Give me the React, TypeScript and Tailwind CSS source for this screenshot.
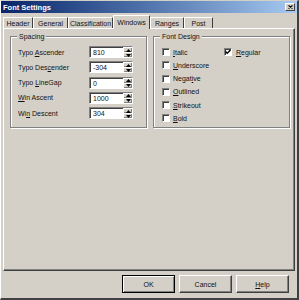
import React from 'react'

const tabs = [
  { label: 'Header', cls: 'w-[30px]' },
  { label: 'General', cls: 'w-[35px]' },
  { label: 'Classification', cls: 'w-[45px]' },
  { label: 'Windows', cls: 'w-[37px]', active: true },
  { label: 'Ranges', cls: 'w-[34px]' },
  { label: 'Post', cls: 'w-[29px]' },
]

const spacing = [
  { pre: 'Typo ', key: 'A', post: 'scender', value: '810' },
  { pre: 'Typo Des', key: 'c', post: 'ender', value: '-304' },
  { pre: 'Typo ', key: 'L', post: 'ineGap', value: '0' },
  { pre: '', key: 'W', post: 'in Ascent', value: '1000' },
  { pre: 'Wi', key: 'n', post: ' Descent', value: '304' },
]

const designLeft = [
  { pre: '', key: 'I', post: 'talic' },
  { pre: '', key: 'U', post: 'nderscore' },
  { pre: 'Negat', key: 'i', post: 've' },
  { pre: '', key: 'O', post: 'utlined' },
  { pre: '', key: 'S', post: 'trikeout' },
  { pre: '', key: 'B', post: 'old' },
]

function Label({ pre, k, post }: { pre: string; k: string; post: string }) {
  return (
    <span className="whitespace-pre">
      {pre}
      <span className="underline underline-offset-[1px]">{k}</span>
      {post}
    </span>
  )
}

function Spin({ value }: { value: string }) {
  return (
    <div className="flex h-[12px] w-[44px] bg-white border border-t-[#808080] border-l-[#808080] border-b-white border-r-white shadow-[inset_1px_1px_0_#404040]">
      <span className="flex-1 pl-[3px] pt-[1px] leading-[9px]">{value}</span>
      <div className="flex flex-col w-[9px] h-[10px]">
        <div className="flex-1 flex items-center justify-center bg-[#d4d0c8] border-t border-l border-t-white border-l-white shadow-[inset_-1px_-1px_0_#808080]">
          <svg width="5" height="3" viewBox="0 0 5 3"><path d="M2.5 0L5 3H0z" fill="#000" /></svg>
        </div>
        <div className="flex-1 flex items-center justify-center bg-[#d4d0c8] border-t border-l border-t-white border-l-white shadow-[inset_-1px_-1px_0_#808080]">
          <svg width="5" height="3" viewBox="0 0 5 3"><path d="M0 0H5L2.5 3z" fill="#000" /></svg>
        </div>
      </div>
    </div>
  )
}

function Check({ checked }: { checked?: boolean }) {
  return (
    <span className="w-[8px] h-[8px] bg-white border border-t-[#808080] border-l-[#808080] border-b-white border-r-white shadow-[inset_1px_1px_0_#404040] flex items-center justify-center">
      {checked && (
        <svg width="6" height="6" viewBox="0 0 6 6">
          <path d="M0.5 2.5L2.2 4.3L5.5 1" stroke="#000" strokeWidth="1.4" fill="none" />
        </svg>
      )}
    </span>
  )
}

function Group({ title, children, cls }: { title: string; children: React.ReactNode; cls: string }) {
  return (
    <div className={`relative h-[92px] border border-[#808080] shadow-[inset_1px_1px_0_#fff,1px_1px_0_#fff] ${cls}`}>
      <span className="absolute left-[6px] -top-[5px] px-[2px] bg-[#d4d0c8] leading-[9px]">{title}</span>
      {children}
    </div>
  )
}

function Button({ children, def }: { children: React.ReactNode; def?: boolean }) {
  return (
    <div
      className={`w-[53px] h-[18px] flex items-center justify-center bg-[#d4d0c8] ${
        def
          ? 'border border-black shadow-[inset_1px_1px_0_#fff,inset_-1px_-1px_0_#808080]'
          : 'border border-t-white border-l-white border-r-[#404040] border-b-[#404040] shadow-[inset_-1px_-1px_0_#808080]'
      }`}
    >
      {children}
    </div>
  )
}

export default function App() {
  return (
    <div className="w-[299px] h-[300px] bg-[#d4d0c8] font-['Liberation_Sans',Arial,sans-serif] text-[7px] leading-[9px] text-[#111] flex flex-col border-r-2 border-b-2 border-r-[#404040] border-b-[#404040] border-l border-t border-l-[#ffffff] border-t-[#d4d0c8]">
      {/* title bar */}
      <div className="h-[12px] flex items-center justify-between bg-gradient-to-r from-[#0a246a] to-[#a6caf0] pl-[2px] pr-[2px]">
        <span className="text-white font-bold text-[7.5px]">Font Settings</span>
        <div className="w-[10px] h-[8px] bg-[#d4d0c8] border border-t-white border-l-white border-r-[#404040] border-b-[#404040] flex items-center justify-center">
          <svg width="5" height="4" viewBox="0 0 5 4">
            <path d="M0.5 0.5L4.5 3.5M4.5 0.5L0.5 3.5" stroke="#000" strokeWidth="1.2" />
          </svg>
        </div>
      </div>

      {/* tabs */}
      <div className="h-[15px] flex items-end pl-[2px]">
        {tabs.map(t =>
          t.active ? (
            <div
              key={t.label}
              className={`${t.cls} h-[14px] -mb-px relative z-10 bg-[#d4d0c8] border-l border-t border-r border-l-white border-t-white border-r-[#404040] rounded-t-[1px] flex items-start justify-center pt-[2px]`}
            >
              {t.label}
            </div>
          ) : (
            <div
              key={t.label}
              className={`${t.cls} h-[11px] border-l border-t border-r border-l-white border-t-white border-r-[#404040] rounded-t-[1px] flex items-start justify-center pt-[1px]`}
            >
              {t.label}
            </div>
          )
        )}
      </div>

      {/* tab panel */}
      <div className="mx-[2px] h-[243px] border border-l-white border-t-white border-r-[#404040] border-b-[#404040] shadow-[inset_-1px_-1px_0_#808080] flex gap-[6px] pl-[6px] pt-[7px]">
        <Group title="Spacing" cls="w-[137px]">
          <div className="flex flex-col gap-[3.25px] pl-[7px] pt-[9px]">
            {spacing.map(r => (
              <div key={r.value} className="flex items-center h-[12px]">
                <span className="w-[71px]">
                  <Label pre={r.pre} k={r.key} post={r.post} />
                </span>
                <Spin value={r.value} />
              </div>
            ))}
          </div>
        </Group>
        <Group title="Font Design" cls="w-[137px]">
          <div className="flex pl-[8px] pt-[11px]">
            <div className="w-[62px] flex flex-col gap-[5.3px]">
              {designLeft.map(r => (
                <div key={r.post} className="flex items-center gap-[3px] h-[8px]">
                  <Check />
                  <Label pre={r.pre} k={r.key} post={r.post} />
                </div>
              ))}
            </div>
            <div className="flex flex-col">
              <div className="flex items-center gap-[4px] h-[8px]">
                <Check checked />
                <Label pre="" k="R" post="egular" />
              </div>
            </div>
          </div>
        </Group>
      </div>

      {/* buttons */}
      <div className="flex justify-end gap-[4px] pr-[8px] pt-[4px]">
        <Button def>OK</Button>
        <Button>Cancel</Button>
        <Button>
          <Label pre="" k="H" post="elp" />
        </Button>
      </div>
    </div>
  )
}
